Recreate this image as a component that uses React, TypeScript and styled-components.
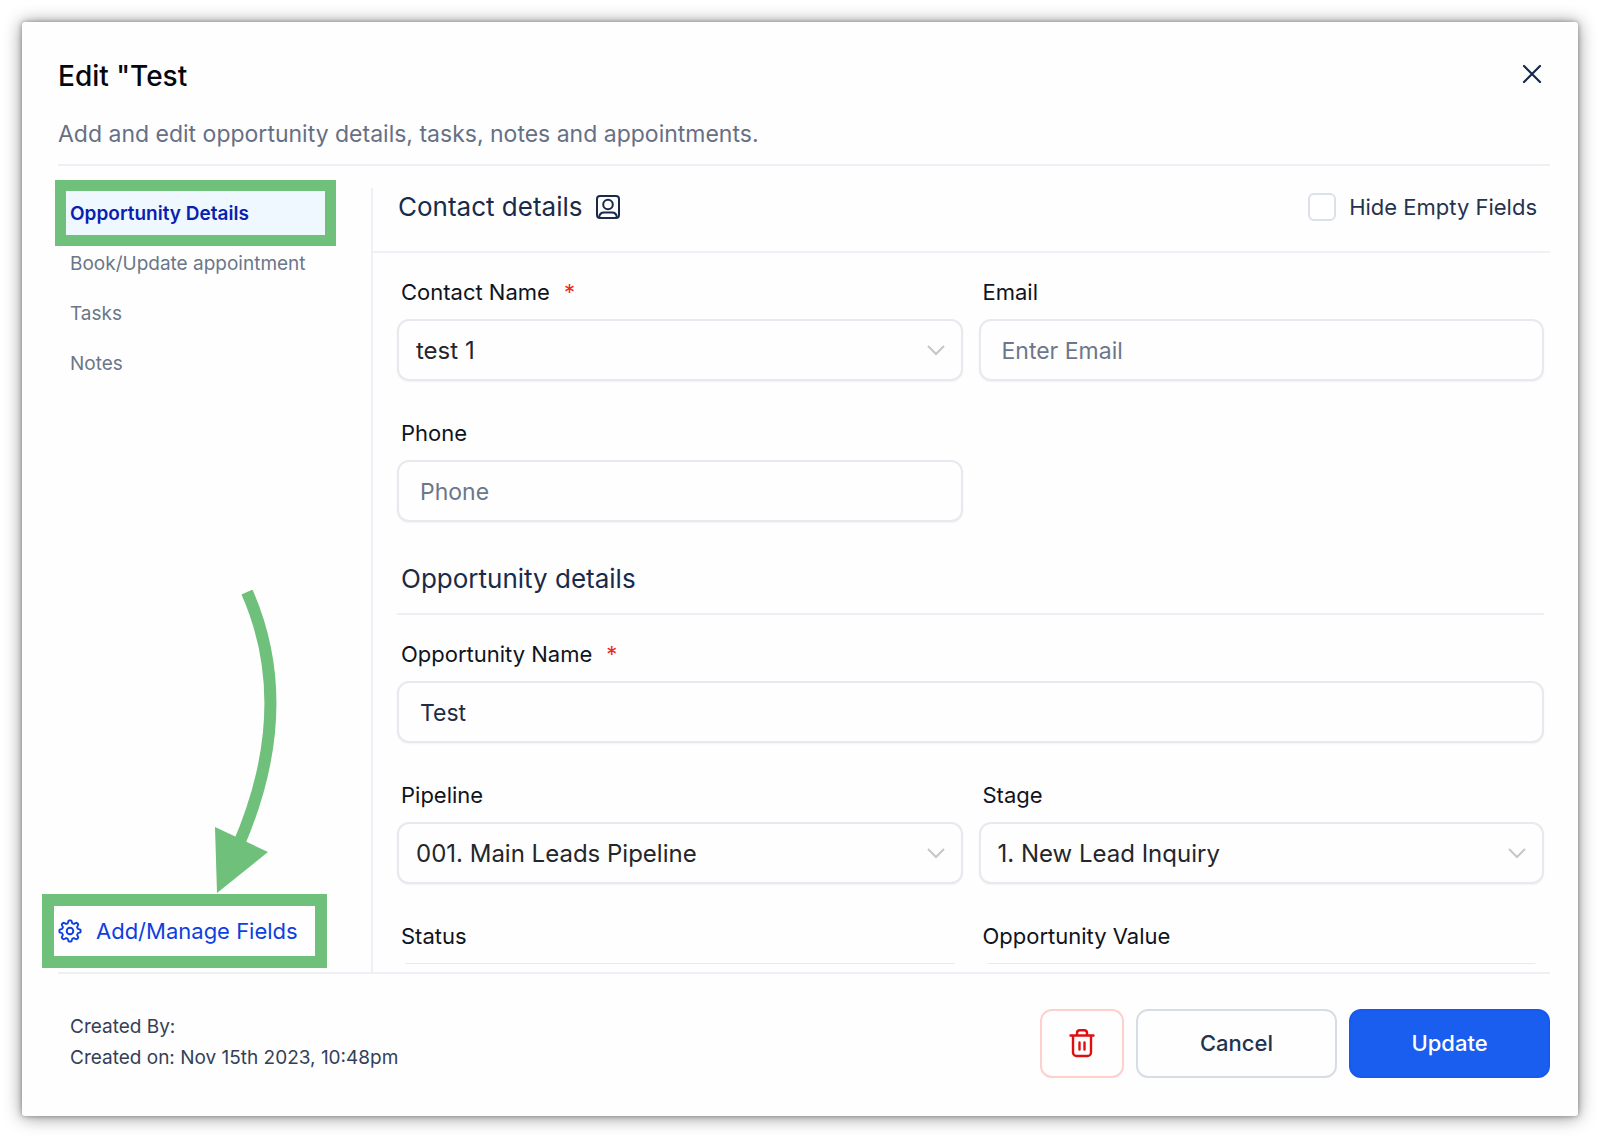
import React from "react";
import styled, { createGlobalStyle } from "styled-components";

const GlobalStyle = createGlobalStyle`
  *, *::before, *::after { box-sizing: border-box; }
  body {
    margin: 0;
    background: #fff;
    color: #101828;
    font-family: Inter, "Liberation Sans", sans-serif;
    font-optical-sizing: none;
  }
  button, input, select { font: inherit; color: inherit; }
`;

const Page = styled.div`
  display: flex;
  height: 100vh;
  min-height: 700px;
  padding: 22px;
`;

const Dialog = styled.section`
  flex: 1;
  min-width: 0;
  display: flex;
  flex-direction: column;
  padding: 0 28px 0 36px;
  background: #fefefe;
  border-radius: 3px;
  box-shadow: 0 0 5px rgba(0, 0, 0, 0.35), 0 1px 18px rgba(0, 0, 0, 0.45);
`;

const Header = styled.header`
  display: flex;
  justify-content: space-between;
  align-items: flex-start;
  padding: 36px 7px 14px 0;
  border-bottom: 2px solid #eff0f5;
`;

const Title = styled.h1`
  margin: 0 0 24px;
  font-size: 28px;
  line-height: 36px;
  font-weight: 500;
  color: #05070f;
`;

const Subtitle = styled.p`
  margin: 0;
  font-size: 23px;
  line-height: 32px;
  color: #667085;
`;

const CloseButton = styled.button`
  display: grid;
  place-items: center;
  width: 22px;
  height: 32px;
  padding: 0;
  border: 0;
  background: none;
  color: #15294b;
`;

const Body = styled.div`
  flex: 1;
  min-height: 0;
  display: flex;
`;

const Sidebar = styled.aside`
  flex: 0 0 313px;
  display: flex;
  flex-direction: column;
  justify-content: space-between;
  padding: 25px 46px 16px 0;
`;

const Nav = styled.nav`
  display: flex;
  flex-direction: column;
  gap: 6px;
  padding-left: 8px;
`;

const NavLink = styled.a<{ $active?: boolean }>`
  padding: 1px 4px 0;
  font-size: 19px;
  line-height: 43px;
  text-decoration: none;
  font-weight: ${(p) => (p.$active ? 600 : 400)};
  color: ${(p) => (p.$active ? "#0a1fb0" : "#6b7689")};
  background: ${(p) => (p.$active ? "#eff8ff" : "transparent")};
  outline: ${(p) => (p.$active ? "11px solid #6ec07a" : "none")};
`;

const ManageArea = styled.div`
  position: relative;
  margin: 0 10px 0 -4px;
`;

const ManageButton = styled.button`
  display: flex;
  align-items: center;
  gap: 14px;
  width: 100%;
  height: 50px;
  padding: 0 4px;
  border: 0;
  background: #fefefe;
  outline: 12px solid #6ec07a;
  font-size: 22px;
  color: #0e3fe0;
  white-space: nowrap;
`;

const Arrow = styled.svg`
  position: absolute;
  left: 158px;
  bottom: 62px;
  pointer-events: none;
`;

const Main = styled.main`
  flex: 1;
  min-width: 0;
  display: flex;
  flex-direction: column;
  margin-top: 22px;
  border-left: 2px solid #eff0f5;
  padding-bottom: 8px;
`;

const MainHeader = styled.div`
  display: flex;
  justify-content: space-between;
  align-items: flex-start;
  height: 65px;
  padding: 3px 13px 0 25px;
  border-bottom: 2px solid #eff0f5;
`;

const SectionTitle = styled.h2`
  display: flex;
  align-items: center;
  gap: 14px;
  margin: 0;
  font-size: 26px;
  line-height: 32px;
  font-weight: 400;
  color: #1a2b49;
`;

const CheckLabel = styled.label`
  display: flex;
  align-items: center;
  gap: 13px;
  font-size: 22px;
  line-height: 32px;
  color: #26334d;
`;

const Checkbox = styled.input`
  appearance: none;
  width: 28px;
  height: 28px;
  margin: 0;
  border: 2px solid #dce0e7;
  border-radius: 6px;
  background: #fff;
`;

const Form = styled.form`
  flex: 1;
  min-height: 0;
  overflow-y: auto;
  scrollbar-width: none;
  padding: 23px 6px 0 24px;
`;

const Fields = styled.div`
  display: grid;
  grid-template-columns: 1fr 1fr;
  gap: 36px 16px;
`;

const FieldBox = styled.div<{ $wide?: boolean }>`
  grid-column: ${(p) => (p.$wide ? "1 / -1" : "auto")};
  display: flex;
  flex-direction: column;
  gap: 11px;
`;

const Label = styled.label`
  padding-left: 4px;
  font-size: 22px;
  line-height: 32px;
  color: #101320;
`;

const Required = styled.span`
  margin-left: 14px;
  color: #ea2a20;
`;

const TextInput = styled.input`
  width: 100%;
  height: 62px;
  padding: 2px 21px 0;
  border: 2px solid #e8e9ef;
  border-radius: 12px;
  background: #fefefe;
  box-shadow: 0 1px 2px rgba(16, 24, 40, 0.05);
  font-size: 23px;
  color: #1d2c47;
  &::placeholder { color: #6c778c; opacity: 1; }
`;

const SelectWrap = styled.div`
  position: relative;
  display: flex;
  svg {
    position: absolute;
    right: 18px;
    top: 24px;
    pointer-events: none;
  }
`;

const Select = styled.select`
  appearance: none;
  width: 100%;
  height: 62px;
  padding: 0 48px 0 17px;
  border: 2px solid #e8e9ef;
  border-radius: 12px;
  background: #fefefe;
  box-shadow: 0 1px 2px rgba(16, 24, 40, 0.05);
  font-size: 24px;
  color: #24262b;
`;

const FormSection = styled.div`
  margin: 41px 0 23px;
  padding: 0 4px 18px;
  border-bottom: 2px solid #eff0f5;
`;

const Footer = styled.footer`
  display: flex;
  align-items: center;
  justify-content: space-between;
  height: 144px;
  padding-bottom: 4px;
  border-top: 2px solid #edf1f6;
`;

const Meta = styled.div`
  padding: 0 0 2px 12px;
  font-size: 19px;
  line-height: 31px;
  color: #344057;
  p { margin: 0; }
`;

const Actions = styled.div`
  display: flex;
  gap: 12px;
`;

const Button = styled.button<{ $kind: "danger" | "plain" | "primary" }>`
  display: grid;
  place-items: center;
  width: ${(p) => (p.$kind === "danger" ? 84 : 201)}px;
  height: 69px;
  padding: 0;
  border-radius: 12px;
  font-size: 22px;
  font-weight: 500;
  border: 2px solid
    ${(p) => ({ danger: "#fdcfcd", plain: "#d8dde5", primary: "#1559ed" })[p.$kind]};
  background: ${(p) => (p.$kind === "primary" ? "#195eee" : "#fefefe")};
  color: ${(p) => ({ danger: "#e00f0f", plain: "#22324f", primary: "#fff" })[p.$kind]};
`;

const stroke = {
  fill: "none",
  stroke: "currentColor",
  strokeLinecap: "round" as const,
  strokeLinejoin: "round" as const,
};

const gearPath = (() => {
  const pts: string[] = [];
  const n = 144;
  for (let i = 0; i < n; i++) {
    const a = (i / n) * Math.PI * 2;
    const wave = Math.max(-1, Math.min(1, Math.cos(a * 8) * 1.6));
    const r = 9.3 + wave * 1.3;
    pts.push(`${(12 + r * Math.cos(a)).toFixed(2)} ${(12 + r * Math.sin(a)).toFixed(2)}`);
  }
  return `M${pts.join("L")}Z`;
})();

const GearIcon = () => (
  <svg width="24" height="24" viewBox="0 0 24 24" {...stroke} strokeWidth="1.9" aria-hidden>
    <path d={gearPath} />
    <circle cx="12" cy="12" r="3.3" />
  </svg>
);

const ContactIcon = () => (
  <svg width="24" height="24" viewBox="0 0 24 24" {...stroke} strokeWidth="2" aria-hidden>
    <rect x="1" y="1" width="22" height="22" rx="3" />
    <circle cx="12" cy="9.5" r="4.8" />
    <path d="M3.2 22.2C3.6 19 5.4 17.6 8 17.6h8c2.600 0 4.400 1.400 4.800 4.600" />
  </svg>
);

const TrashIcon = () => (
  <svg width="26" height="30" viewBox="0 0 26 30" {...stroke} strokeWidth="2.4" aria-hidden>
    <path d="M1.500 7.500h23M4 7.500v17a3.500 3.500 0 0 0 3.500 3.500h11a3.500 3.500 0 0 0 3.500-3.500v-17M8 7V5a2.800 2.800 0 0 1 2.800-2.800h4.400A2.800 2.800 0 0 1 18 5v2M10.500 14.500v7M15.500 14.500v7" />
  </svg>
);

const Chevron = () => (
  <svg width="18" height="14" viewBox="0 0 18 14" fill="none" stroke="#c5c6ca" strokeWidth="2" aria-hidden>
    <path d="M1 3l8 8 8-8" />
  </svg>
);

type FieldProps = {
  id: string;
  label: string;
  required?: boolean;
  wide?: boolean;
  value?: string;
  placeholder?: string;
  select?: boolean;
};

const Field = ({ id, label, required, wide, value, placeholder, select }: FieldProps) => (
  <FieldBox $wide={wide}>
    <Label htmlFor={id}>
      {label}
      {required && <Required>*</Required>}
    </Label>
    {select ? (
      <SelectWrap>
        <Select id={id} defaultValue={value}>
          <option>{value}</option>
        </Select>
        <Chevron />
      </SelectWrap>
    ) : (
      <TextInput id={id} defaultValue={value} placeholder={placeholder} />
    )}
  </FieldBox>
);

export default function App() {
  return (
    <>
      <GlobalStyle />
      <Page>
        <Dialog role="dialog" aria-labelledby="dialog-title">
          <Header>
            <div>
              <Title id="dialog-title">Edit "Test</Title>
              <Subtitle>Add and edit opportunity details, tasks, notes and appointments.</Subtitle>
            </div>
            <CloseButton aria-label="Close">
              <svg width="20" height="20" viewBox="0 0 20 20" {...stroke} strokeWidth="2.2">
                <path d="M2 2l16 16M18 2L2 18" />
              </svg>
            </CloseButton>
          </Header>
          <Body>
            <Sidebar>
              <Nav>
                <NavLink href="#details" $active>Opportunity Details</NavLink>
                <NavLink href="#appointment">Book/Update appointment</NavLink>
                <NavLink href="#tasks">Tasks</NavLink>
                <NavLink href="#notes">Notes</NavLink>
              </Nav>
              <ManageArea>
                <ManageButton>
                  <GearIcon />
                  Add/Manage Fields
                </ManageButton>
                <Arrow width="66" height="304" viewBox="212 590 66 304" aria-hidden>
                  <path d="M247 592Q298 708 238 846" fill="none" stroke="#6ec07a" strokeWidth="12" />
                  <path d="M215 827L268 852L217 893Z" fill="#6ec07a" />
                </Arrow>
              </ManageArea>
            </Sidebar>
            <Main>
              <MainHeader>
                <SectionTitle>
                  Contact details
                  <ContactIcon />
                </SectionTitle>
                <CheckLabel>
                  <Checkbox type="checkbox" />
                  Hide Empty Fields
                </CheckLabel>
              </MainHeader>
              <Form>
                <Fields>
                  <Field id="contact" label="Contact Name" required select value="test 1" />
                  <Field id="email" label="Email" placeholder="Enter Email" />
                  <Field id="phone" label="Phone" placeholder="Phone" />
                </Fields>
                <FormSection>
                  <SectionTitle>Opportunity details</SectionTitle>
                </FormSection>
                <Fields>
                  <Field id="name" label="Opportunity Name" required wide value="Test" />
                  <Field id="pipeline" label="Pipeline" select value="001. Main Leads Pipeline" />
                  <Field id="stage" label="Stage" select value="1. New Lead Inquiry" />
                  <Field id="status" label="Status" select value="Open" />
                  <Field id="value" label="Opportunity Value" value="" />
                </Fields>
              </Form>
            </Main>
          </Body>
          <Footer>
            <Meta>
              <p>Created By:</p>
              <p>Created on: Nov 15th 2023, 10:48pm</p>
            </Meta>
            <Actions>
              <Button $kind="danger" aria-label="Delete"><TrashIcon /></Button>
              <Button $kind="plain">Cancel</Button>
              <Button $kind="primary">Update</Button>
            </Actions>
          </Footer>
        </Dialog>
      </Page>
    </>
  );
}
